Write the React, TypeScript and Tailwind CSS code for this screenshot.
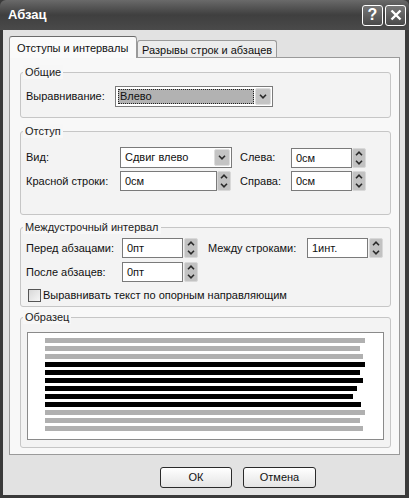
import React from 'react';

const Chevron = ({ up = false }: { up?: boolean }) => (
  <svg width="8" height="5" viewBox="0 0 8 5">
    <path d={up ? 'M1 4.2 L4 1.2 L7 4.2' : 'M1 0.8 L4 3.8 L7 0.8'} stroke="#2a2a2a" strokeWidth="1.6" fill="none" />
  </svg>
);

const Spinner = () => (
  <div className="flex h-[20px] w-[14px] flex-col rounded-[2px] border border-[#d8d8d8] bg-[#c2c2c2]">
    <div className="flex flex-1 items-center justify-center">
      <Chevron up />
    </div>
    <div className="flex flex-1 items-center justify-center">
      <Chevron />
    </div>
  </div>
);

const Field = ({ value, w }: { value: string; w: string }) => (
  <div className={`h-[20px] border border-[#7a7a7a] bg-white pl-[4px] leading-[18px] ${w}`}>{value}</div>
);

const Combo = ({ value, w, selected = false }: { value: string; w: string; selected?: boolean }) => (
  <div className={`flex h-[21px] items-center gap-[1px] border border-[#7a7a7a] bg-white p-[1px] ${w}`}>
    <div
      className={
        selected
          ? 'ml-[1px] h-[15px] flex-1 border border-dotted border-[#222] bg-[#b2b2b2] pl-[1px] leading-[13px]'
          : 'flex-1 pl-[3px]'
      }
    >
      {value}
    </div>
    <div className="flex h-[17px] w-[16px] items-center justify-center rounded-[2px] border border-[#dedede] bg-[#c4c4c4]">
      <Chevron />
    </div>
  </div>
);

const Group = ({ title, className, children }: { title: string; className: string; children?: React.ReactNode }) => (
  <div className={`relative rounded-[3px] border border-[#c6c6c6] bg-[#f3f3f3] ${className}`}>
    <span className="absolute -top-[8px] left-[2px] bg-[#f7f7f7] px-[2px] leading-[14px] text-[#222]">{title}</span>
    {children}
  </div>
);

const PREVIEW = [
  { w: 'w-[320px]', dark: false },
  { w: 'w-[315px]', dark: false },
  { w: 'w-[318px]', dark: false },
  { w: 'w-[320px]', dark: true },
  { w: 'w-[315px]', dark: true },
  { w: 'w-[318px]', dark: true },
  { w: 'w-[312px]', dark: true },
  { w: 'w-[308px]', dark: true },
  { w: 'w-[316px]', dark: true },
  { w: 'w-[320px]', dark: false },
  { w: 'w-[315px]', dark: false },
  { w: 'w-[318px]', dark: false },
];

export default function App() {
  return (
    <div className="flex h-[498px] w-[409px] flex-col overflow-hidden bg-[#3a3a3a] font-['Liberation_Sans',Arial,sans-serif] text-[11px] text-[#111]">
      {/* title bar */}
      <div className="flex h-[30px] items-center rounded-t-[6px] bg-gradient-to-b from-[#6a6a6a] via-[#3f3f3f] to-[#4a4a4a] pl-[8px] pr-[3px]">
        <span className="flex-1 text-[13px] font-bold text-white">Абзац</span>
        <div className="flex gap-[2px]">
          <div className="flex h-[21px] w-[21px] items-center justify-center rounded-[3px] border border-white bg-gradient-to-b from-[#777] to-[#4a4a4a] text-[16px] font-bold leading-none text-white">
            ?
          </div>
          <div className="flex h-[21px] w-[21px] items-center justify-center rounded-[3px] border border-white bg-gradient-to-b from-[#777] to-[#4a4a4a]">
            <svg width="12" height="12" viewBox="0 0 12 12">
              <path d="M1.5 1.5 L10.5 10.5 M10.5 1.5 L1.5 10.5" stroke="#fff" strokeWidth="2.4" />
            </svg>
          </div>
        </div>
      </div>

      {/* body */}
      <div className="mb-[3px] ml-[3px] mr-[4px] flex flex-1 flex-col bg-[#e2e2e2]">
        {/* tabs */}
        <div className="flex items-end pl-[6px] pt-[6px]">
          <div className="relative z-10 -mb-px h-[22px] w-[128px] rounded-t-[3px] border border-b-0 border-[#9a9a9a] border-t-[#6a6a6a] bg-[#fafafa] pl-[7px] pt-[3px]">
            Отступы и интервалы
          </div>
          <div className="h-[17px] w-[140px] rounded-t-[3px] border border-b-0 border-[#9a9a9a] bg-[#ececec] pl-[4px] pt-[1px]">
            Разрывы строк и абзацев
          </div>
        </div>

        {/* panel */}
        <div className="ml-[6px] flex h-[398px] w-[391px] flex-col border border-[#9a9a9a] bg-[#f8f8f8] pl-[10px]">
          <Group title="Общие" className="mt-[14px] h-[46px] w-[371px] pl-[5px] pt-[13px]">
            <div className="flex items-center">
              <span className="w-[89px]">Выравнивание:</span>
              <Combo value="Влево" w="w-[158px]" selected />
            </div>
          </Group>

          <Group title="Отступ" className="mt-[13px] h-[84px] w-[371px] pl-[5px] pt-[15px]">
            <div className="flex flex-col gap-[3px]">
              <div className="flex items-center">
                <span className="w-[94px]">Вид:</span>
                <Combo value="Сдвиг влево" w="w-[112px]" />
                <span className="ml-[8px] w-[51px]">Слева:</span>
                <Field value="0см" w="w-[61px]" />
                <Spinner />
              </div>
              <div className="flex items-center">
                <span className="w-[94px]">Красной строки:</span>
                <Field value="0см" w="w-[97px]" />
                <Spinner />
                <span className="ml-[9px] w-[51px]">Справа:</span>
                <Field value="0см" w="w-[61px]" />
                <Spinner />
              </div>
            </div>
          </Group>

          <Group title="Междустрочный интервал" className="mt-[12px] h-[80px] w-[371px] pl-[5px] pt-[10px]">
            <div className="flex flex-col">
              <div className="flex items-center">
                <span className="w-[96px]">Перед абзацами:</span>
                <Field value="0пт" w="w-[61px]" />
                <span className="w-[1px]" />
                <Spinner />
                <span className="ml-[10px] w-[99px]">Между строками:</span>
                <Field value="1инт." w="w-[61px]" />
                <span className="w-[1px]" />
                <Spinner />
              </div>
              <div className="mt-[4px] flex items-center">
                <span className="w-[96px]">После абзацев:</span>
                <Field value="0пт" w="w-[61px]" />
                <span className="w-[1px]" />
                <Spinner />
              </div>
              <div className="mt-[5px] flex items-center">
                <div className="ml-[2px] mr-[2px] h-[13px] w-[13px] border border-[#555] bg-gradient-to-br from-[#d8d8d8] to-[#f6f6f6]" />
                <span>Выравнивать текст по опорным направляющим</span>
              </div>
            </div>
          </Group>

          <Group title="Образец" className="mt-[10px] h-[131px] w-[371px] pl-[6px] pt-[14px]">
            <div className="flex h-[108px] w-[357px] flex-col gap-[3px] border border-[#8a8a8a] bg-white pl-[17px] pt-[5px]">
              {PREVIEW.map((l, i) => (
                <div key={i} className={`h-[5px] ${l.w} ${l.dark ? 'bg-black' : 'bg-[#b0b0b0]'}`} />
              ))}
            </div>
          </Group>
        </div>

        {/* buttons */}
        <div className="flex gap-[11px] pl-[157px] pt-[12px]">
          <button className="h-[21px] w-[72px] rounded-[3px] border border-[#2a2a2a] bg-gradient-to-b from-white to-[#e4e4e4] text-[11px]">
            ОК
          </button>
          <button className="h-[21px] w-[73px] rounded-[3px] border border-[#2a2a2a] bg-gradient-to-b from-white to-[#e4e4e4] text-[11px]">
            Отмена
          </button>
        </div>
      </div>
    </div>
  );
}
